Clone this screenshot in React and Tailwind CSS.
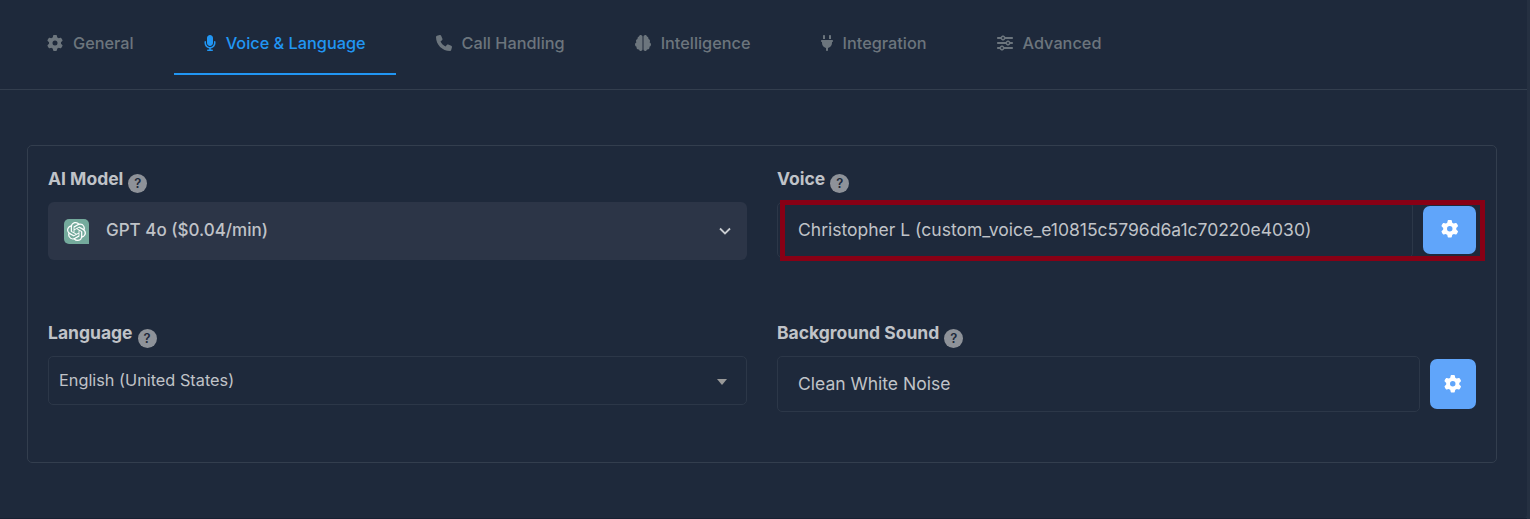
import { FaGear, FaMicrophone, FaPhone, FaBrain, FaPlug, FaSliders } from "react-icons/fa6";
import { SiOpenai } from "react-icons/si";

const tabs = [
  { label: "General", Icon: FaGear, size: "w-4" },
  { label: "Voice & Language", Icon: FaMicrophone, size: "w-3", active: true },
  { label: "Call Handling", Icon: FaPhone, size: "w-4" },
  { label: "Intelligence", Icon: FaBrain, size: "w-4" },
  { label: "Integration", Icon: FaPlug, size: "w-3" },
  { label: "Advanced", Icon: FaSliders, size: "w-4" },
];

function Tab({ label, Icon, size, active }) {
  return (
    <button
      className={`flex h-[62px] items-center gap-2.5 border-b-2 px-[30px] text-[16.3px] font-medium whitespace-nowrap ${
        active ? "border-[#2196f3] text-[#2196f3]" : "border-transparent text-[#6c757d]"
      }`}
    >
      <Icon className={`h-4 shrink-0 ${size}`} />
      <span>{label}</span>
    </button>
  );
}

function FieldLabel({ children, badge = "mt-[9px]" }) {
  return (
    <div className="flex h-[37px] items-start gap-[5px] text-[17.5px] leading-[27px] font-bold text-[#c0c3c8]">
      <span>{children}</span>
      <span
        className={`flex size-[19px] items-center justify-center rounded-full bg-[#8e9299] text-[13px] leading-none font-semibold text-[#1e293b] ${badge}`}
      >
        ?
      </span>
    </div>
  );
}

export default function App() {
  return (
    <div className="h-[519px] w-[1530px] overflow-hidden bg-[#253041] pr-[3px] font-['Inter',sans-serif]">
      <div className="h-[518px] rounded-br-[4px] bg-[#1e293b]">
        <nav className="flex h-[90px] gap-2.5 border-b border-[#333e4e] pt-[13px] pl-[17px]">
          {tabs.map((tab) => (
            <Tab key={tab.label} {...tab} />
          ))}
        </nav>

        <div className="pt-[55px] pl-[27px]">
          <section className="grid h-[318px] w-[1470px] grid-cols-[699px_699px] grid-rows-[154px_1fr] gap-x-[30px] rounded-[5px] border border-[#333e4e] px-5 pt-[19px]">
            <div>
              <FieldLabel>AI Model</FieldLabel>
              <div className="flex h-[58px] items-center rounded-md bg-[#2c3547] pr-[15px] pl-4">
                <span className="flex size-[25px] items-center justify-center rounded-[5px] rounded-br-none bg-[#74aa9c]">
                  <SiOpenai className="size-[19px] text-white" />
                </span>
                <span className="ml-[17px] text-[17px] font-medium text-[#c0c3c8]">GPT 4o ($0.04/min)</span>
                <svg className="ml-auto h-[14px] w-[14px]" viewBox="0 0 14 14" fill="none" stroke="#c9ccd0" strokeWidth="1.8">
                  <path d="M2 4.5 7 9.5 12 4.5" />
                </svg>
              </div>
            </div>

            <div>
              <FieldLabel>Voice</FieldLabel>
              <div className="relative flex h-[56px] items-start justify-between">
                <div className="flex h-[56px] w-[636px] items-center rounded-[5px] border border-[#2c3748] pl-5 text-[17.5px] text-[#c0c3c8]">
                  Christopher L (custom_voice_e10815c5796d6a1c70220e4030)
                </div>
                <button className="mt-[4px] flex h-12 w-[53px] items-center justify-center rounded-[7px] bg-[#60a5fa] pb-[2px]">
                  <FaGear className="size-[17.5px] text-white" />
                </button>
                <div className="pointer-events-none absolute -top-[2px] left-[3px] h-[61px] w-[705px] border-x-5 border-y-[5px] border-[#880015]" />
              </div>
            </div>

            <div>
              <FieldLabel badge="mt-[10px]">Language</FieldLabel>
              <div className="flex h-[49px] items-center justify-between rounded-[5px] border border-[#2c3748] pr-[19px] pl-[10px] text-[16.3px] text-[#c0c3c8]">
                <span>English (United States)</span>
                <svg className="mt-[2px] h-[6px] w-[10px]" viewBox="0 0 10 6" fill="#999">
                  <path d="M0 0h10L5 6z" />
                </svg>
              </div>
            </div>

            <div>
              <FieldLabel badge="mt-[10px]">Background Sound</FieldLabel>
              <div className="flex items-start justify-between">
                <div className="flex h-[56px] w-[643px] items-center rounded-[5px] border border-[#2c3748] pl-5 text-[17.5px] text-[#c0c3c8]">
                  Clean White Noise
                </div>
                <button className="mt-[3px] flex h-[50px] w-[46px] items-center justify-center rounded-[7px] bg-[#60a5fa]">
                  <FaGear className="size-[17.5px] text-white" />
                </button>
              </div>
            </div>
          </section>
        </div>
      </div>
      <div className="h-px bg-[#182132]" />
    </div>
  );
}
